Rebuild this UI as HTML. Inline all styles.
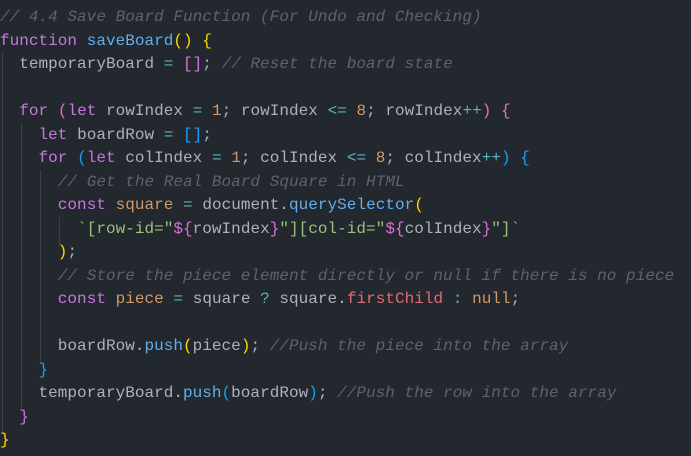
<!DOCTYPE html>
<html><head><meta charset="utf-8"><style>
html,body{margin:0;padding:0;background:#23272e;width:691px;height:456px;overflow:hidden}
pre{margin:0;padding:6px 0 0 0;font-family:"Liberation Mono",monospace;font-size:16px;line-height:23.5px;color:#abb2bf;position:relative;letter-spacing:0.03px}
.c{color:#5c6370;font-style:italic}.k{color:#c678dd}.f{color:#61afef}.o{color:#56b6c2}.n{color:#d19a66}
.s{color:#98c379}.r{color:#e06c75}.y{color:#ffd700}.p{color:#da70d6}.b{color:#179fff}
.g{position:absolute;width:1px;background:#3b4048}
</style></head><body>
<div class="g" style="left:2px;top:52px;height:380px"></div>
<div class="g" style="left:21px;top:123px;height:285px"></div>
<div class="g" style="left:40px;top:170px;height:192px"></div>
<div class="g" style="left:59px;top:217px;height:30px"></div>
<pre><span class="c">// 4.4 Save Board Function (For Undo and Checking)</span>
<span class="k">function</span> <span class="f">saveBoard</span><span class="y">()</span> <span class="y">{</span>
  temporaryBoard <span class="o">=</span> <span class="p">[]</span>; <span class="c">// Reset the board state</span>

  <span class="k">for</span> <span class="p">(</span><span class="k">let</span> rowIndex <span class="o">=</span> <span class="n">1</span>; rowIndex <span class="o">&lt;=</span> <span class="n">8</span>; rowIndex<span class="o">++</span><span class="p">)</span> <span class="p">{</span>
    <span class="k">let</span> boardRow <span class="o">=</span> <span class="b">[]</span>;
    <span class="k">for</span> <span class="b">(</span><span class="k">let</span> colIndex <span class="o">=</span> <span class="n">1</span>; colIndex <span class="o">&lt;=</span> <span class="n">8</span>; colIndex<span class="o">++</span><span class="b">)</span> <span class="b">{</span>
      <span class="c">// Get the Real Board Square in HTML</span>
      <span class="k">const</span> <span class="n">square</span> <span class="o">=</span> document.<span class="f">querySelector</span><span class="y">(</span>
        <span class="s">`[row-id="</span><span class="p">${</span>rowIndex<span class="p">}</span><span class="s">"][col-id="</span><span class="p">${</span>colIndex<span class="p">}</span><span class="s">"]`</span>
      <span class="y">)</span>;
      <span class="c">// Store the piece element directly or null if there is no piece</span>
      <span class="k">const</span> <span class="n">piece</span> <span class="o">=</span> square <span class="o">?</span> square.<span class="r">firstChild</span> <span class="o">:</span> <span class="n">null</span>;

      boardRow.<span class="f">push</span><span class="y">(</span>piece<span class="y">)</span>; <span class="c">//Push the piece into the array</span>
    <span class="b">}</span>
    temporaryBoard.<span class="f">push</span><span class="b">(</span>boardRow<span class="b">)</span>; <span class="c">//Push the row into the array</span>
  <span class="p">}</span>
<span class="y">}</span></pre>
</body></html>
